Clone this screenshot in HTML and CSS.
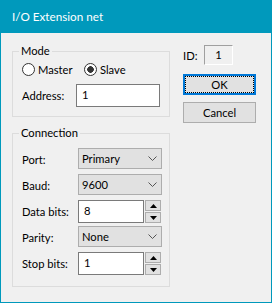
FILE: index.html
```
<!DOCTYPE html>
<html lang="en">
<head>
    <meta charset="UTF-8">
    <title>I/O Extension net</title>
    <link rel="stylesheet" href="styles.css">
</head>
<body>
    <div class="window">
        <div class="titlebar">I/O Extension net</div>
        <div class="client">
            <div class="left">
                <fieldset class="group mode">
                    <legend>Mode</legend>
                    <div class="radios">
                        <label class="radio"><input type="radio" name="mode"> Master</label>
                        <label class="radio"><input type="radio" name="mode" checked> Slave</label>
                    </div>
                    <div class="address">
                        <span class="label">Address:</span>
                        <input class="edit" type="text" value="1">
                    </div>
                </fieldset>

                <fieldset class="group connection">
                    <legend>Connection</legend>
                    <div class="form">
                        <span class="label">Port:</span>
                        <div class="combo">Primary <svg width="9" height="5" viewBox="0 0 9 5"><polyline points="0.5,0.5 4.5,4.5 8.5,0.5" /></svg></div>

                        <span class="label">Baud:</span>
                        <div class="combo">9600 <svg width="9" height="5" viewBox="0 0 9 5"><polyline points="0.5,0.5 4.5,4.5 8.5,0.5" /></svg></div>

                        <span class="label">Data bits:</span>
                        <div class="spin">
                            <input class="edit" type="text" value="8">
                            <div class="spin-buttons">
                                <button class="spin-btn"><svg width="7" height="4" viewBox="0 0 7 4"><polygon points="3.5,0 7,4 0,4" /></svg></button>
                                <button class="spin-btn"><svg width="7" height="4" viewBox="0 0 7 4"><polygon points="0,0 7,0 3.5,4" /></svg></button>
                            </div>
                        </div>

                        <span class="label">Parity:</span>
                        <div class="combo">None <svg width="9" height="5" viewBox="0 0 9 5"><polyline points="0.5,0.5 4.5,4.5 8.5,0.5" /></svg></div>

                        <span class="label">Stop bits:</span>
                        <div class="spin">
                            <input class="edit" type="text" value="1">
                            <div class="spin-buttons">
                                <button class="spin-btn"><svg width="7" height="4" viewBox="0 0 7 4"><polygon points="3.5,0 7,4 0,4" /></svg></button>
                                <button class="spin-btn"><svg width="7" height="4" viewBox="0 0 7 4"><polygon points="0,0 7,0 3.5,4" /></svg></button>
                            </div>
                        </div>
                    </div>
                </fieldset>
            </div>

            <div class="right">
                <div class="id-row">
                    <span class="id-label">ID:</span>
                    <span class="id-box">1</span>
                </div>
                <button class="button default">OK</button>
                <button class="button">Cancel</button>
            </div>
        </div>
    </div>
</body>
</html>
```

FILE: styles.css
```
:root {
    --accent: #0099bc;
    --face: #f0f0f0;
    --btn-face: #e1e1e1;
    --btn-border: #adadad;
    --edit-border: #7a7a7a;
    --group-border: #dcdcdc;
}

* {
    box-sizing: border-box;
}

body {
    margin: 0;
    font-family: Lato, "Noto Sans", sans-serif;
    font-size: 11.2px;
    color: #000;
}

.window {
    width: 272px;
    height: 303px;
    background: var(--face);
    border: 1px solid var(--accent);
    border-top: none;
    display: flex;
    flex-direction: column;
}

.titlebar {
    height: 33px;
    line-height: 33px;
    padding-left: 11px;
    background: var(--accent);
    color: #fff;
    font-size: 11.7px;
}

.client {
    flex: 1;
    display: flex;
    padding: 10px 0 0 11px;
}

.left {
    width: 158px;
}

.group {
    width: 158px;
    margin: 0;
    min-width: 0;
    border: 1px solid var(--group-border);
    padding: 0 9px 9px 9px;
}

.group legend {
    line-height: 16px;
    padding: 0 2px;
    margin-left: -3px;
}

.connection {
    margin-top: 8px;
    padding-bottom: 12px;
}

.radios {
    display: grid;
    grid-template-columns: 62px auto;
    height: 14px;
    margin-top: 3px;
}

.radio {
    display: flex;
    align-items: center;
    gap: 3px;
}

.radio input {
    appearance: none;
    width: 13px;
    height: 13px;
    margin: 0;
    border: 1px solid #333;
    border-radius: 50%;
    background: #fff;
}

.radio input:checked {
    background: radial-gradient(circle, #333 3px, #fff 3.6px);
}

.address {
    display: flex;
    align-items: center;
    margin-top: 8px;
}

.label {
    width: 56px;
}

.edit {
    width: 84px;
    height: 23px;
    margin: 0;
    border: 1px solid var(--edit-border);
    padding: 1px 5px 4px;
    background: #fff;
    font: inherit;
    color: #000;
    outline: none;
}

.form {
    display: grid;
    grid-template-columns: 56px 84px;
    grid-auto-rows: 22px;
    row-gap: 4px;
    align-items: center;
    margin-top: 7px;
}

.combo {
    align-self: start;
    height: 21px;
    display: flex;
    align-items: center;
    justify-content: space-between;
    padding: 0 4px 0 3px;
    border: 1px solid var(--btn-border);
    background: var(--btn-face);
}

.combo svg polyline {
    fill: none;
    stroke: #555;
    stroke-width: 1;
}

.spin {
    align-self: start;
    display: flex;
    height: 23px;
}

.spin .edit {
    width: 66px;
}

.spin-buttons {
    width: 18px;
    display: flex;
    flex-direction: column;
    gap: 1px;
    padding: 0 1px;
}

.spin-btn {
    flex: 1;
    margin: 0;
    padding: 0;
    border: 1px solid var(--btn-border);
    background: var(--btn-face);
    display: flex;
    align-items: center;
    justify-content: center;
}

.spin-btn svg {
    fill: #000;
}

.right {
    width: 74px;
    margin-left: 13px;
    padding-top: 2px;
    display: flex;
    flex-direction: column;
}

.id-row {
    display: flex;
    align-items: center;
    height: 20px;
}

.id-label {
    width: 21px;
}

.id-box {
    width: 29px;
    height: 20px;
    line-height: 18px;
    text-align: center;
    border: 1px solid;
    border-color: #a0a0a0 #fff #fff #a0a0a0;
}

.button {
    width: 73px;
    height: 21px;
    margin: 7px 0 0;
    padding: 0;
    border: 1px solid var(--btn-border);
    background: var(--btn-face);
    font: inherit;
    color: #000;
}

.button.default {
    margin-top: 9px;
    border: 2px solid #0078d7;
    outline: 1px dotted #000;
    outline-offset: -3px;
}
```
